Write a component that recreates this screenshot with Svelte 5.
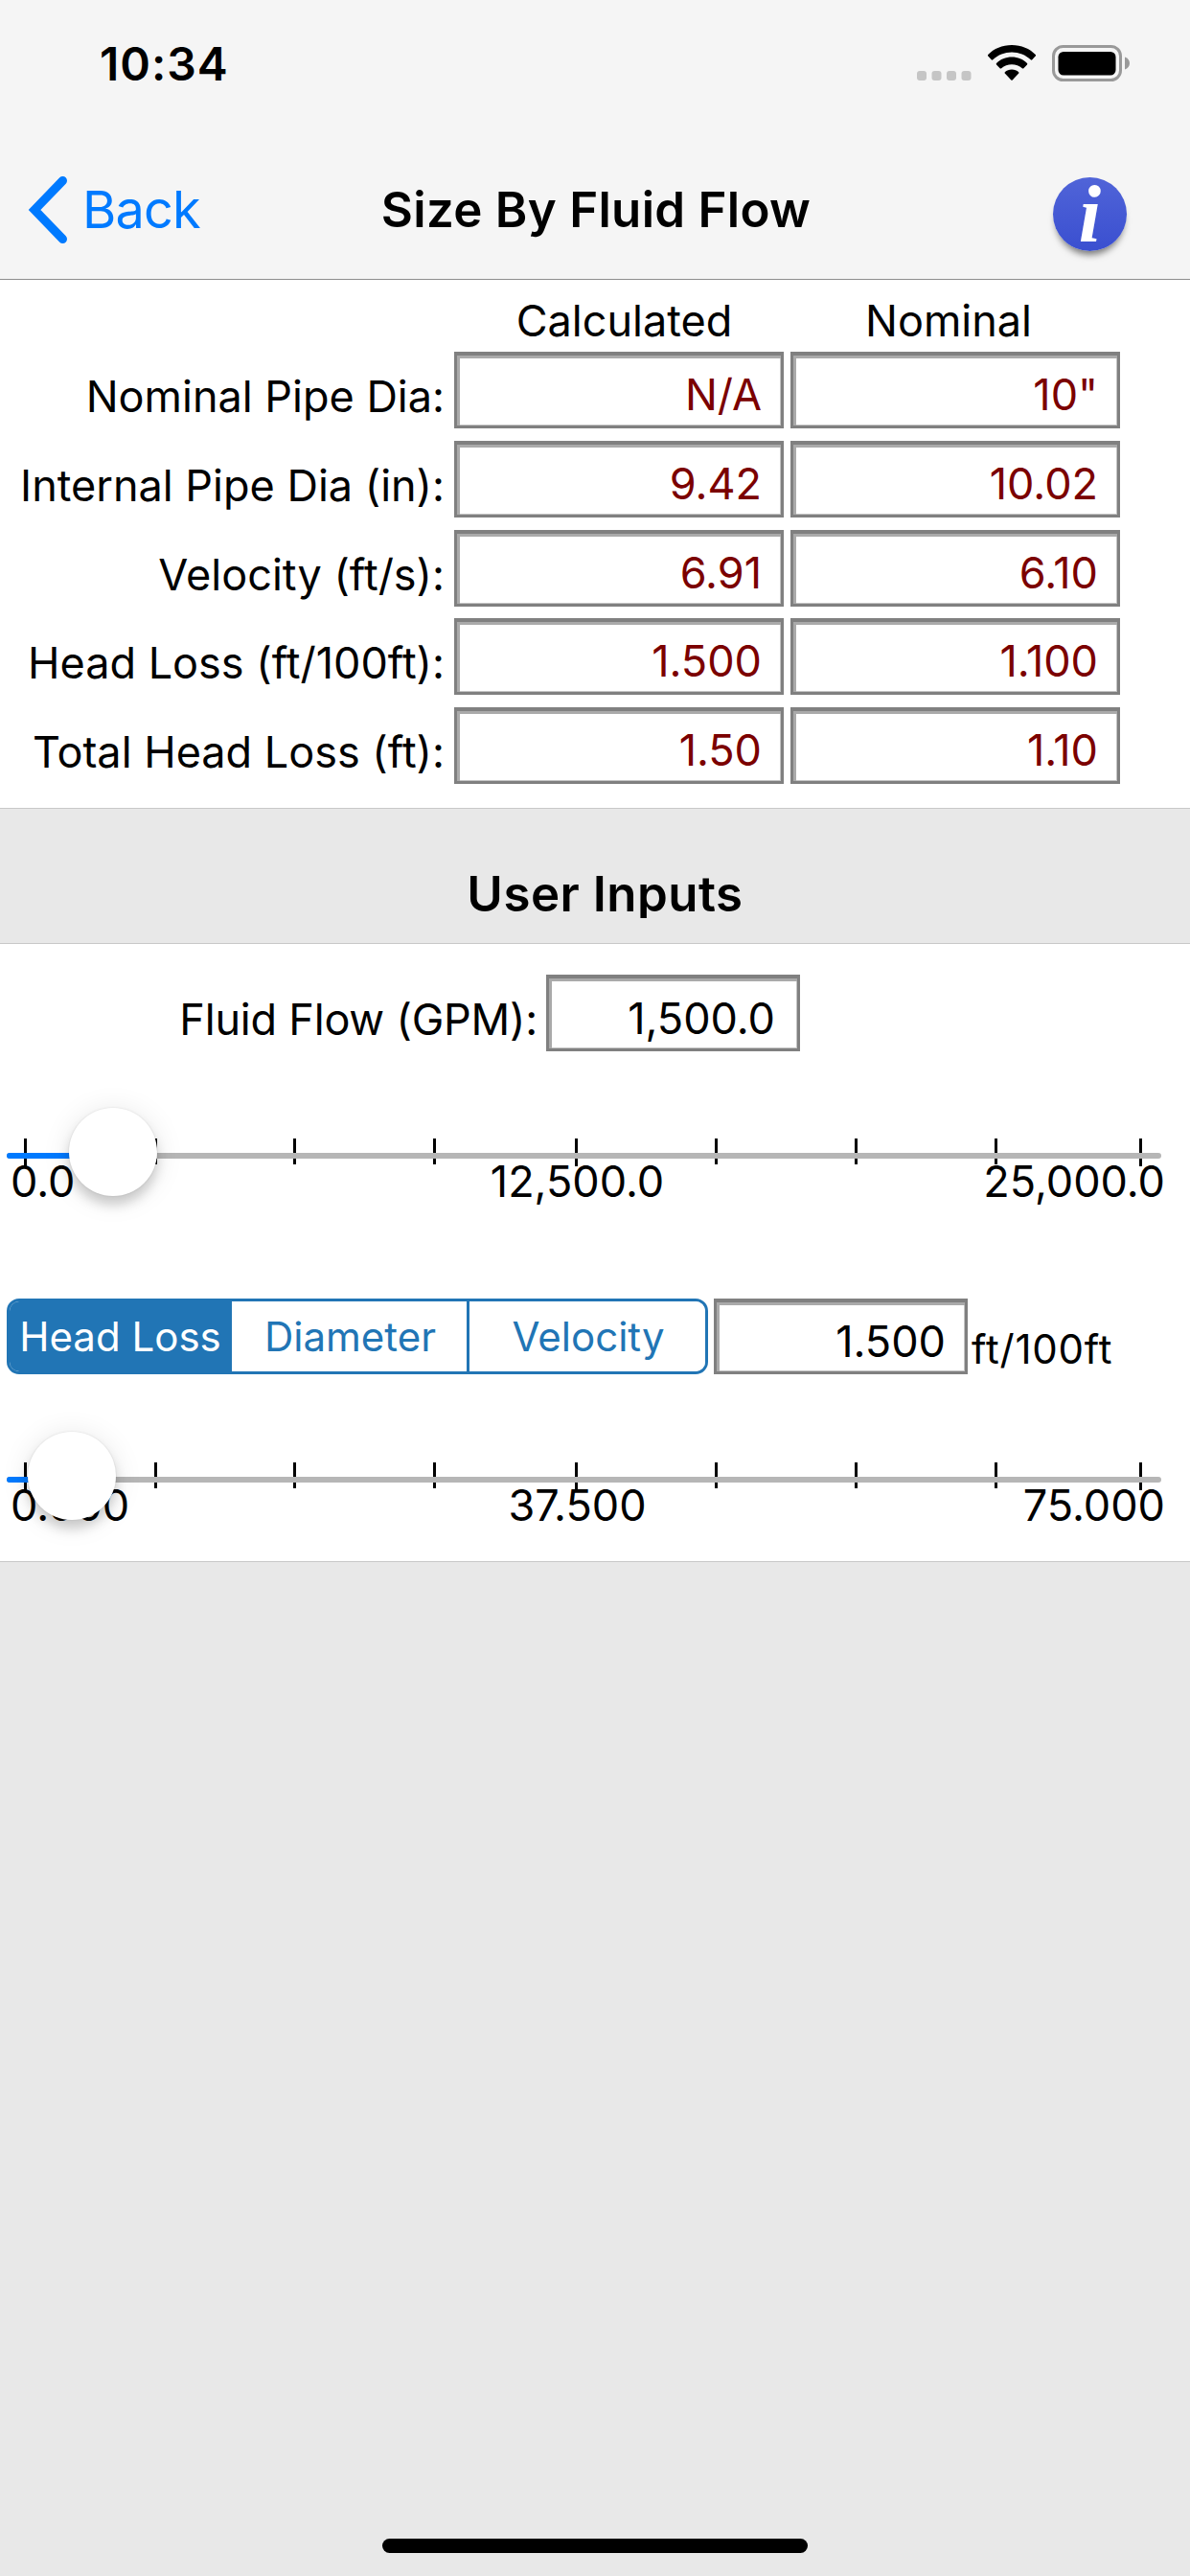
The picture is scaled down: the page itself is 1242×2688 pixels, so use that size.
<script>
  const results = [
    { label: 'Nominal Pipe Dia:', calculated: 'N/A', nominal: '10"' },
    { label: 'Internal Pipe Dia (in):', calculated: '9.42', nominal: '10.02' },
    { label: 'Velocity (ft/s):', calculated: '6.91', nominal: '6.10' },
    { label: 'Head Loss (ft/100ft):', calculated: '1.500', nominal: '1.100' },
    { label: 'Total Head Loss (ft):', calculated: '1.50', nominal: '1.10' },
  ];
  const modes = ['Head Loss', 'Diameter', 'Velocity'];
  // tick offsets along the 1205px track
  const ticks = [18, 154, 299, 445, 593, 739, 885, 1031, 1182];
  const flowScale = ['0.0', '12,500.0', '25,000.0'];
  const lossScale = ['0.000', '37.500', '75.000'];

  let mode = $state('Head Loss');
  let flow = $state('1,500.0');
  let loss = $state('1.500');
</script>

{#snippet slider(thumb, scale)}
  <div class="slider">
    <div class="track">
      {#each ticks as x, i}
        <span class="tick" class:long={i % 4 == 0} style="left: {x}px"></span>
      {/each}
      <div class="rail"></div>
      <div class="fill" style="width: {thumb}px"></div>
    </div>
    <div class="scale">
      {#each scale as text}
        <span>{text}</span>
      {/each}
    </div>
    <div class="thumb" style="left: {thumb}px"></div>
  </div>
{/snippet}

<div class="screen">
  <header>
    <div class="status">
      <span class="time">10:34</span>
      <div class="indicators">
        <svg class="cell" width="58" height="12" viewBox="0 0 58 12">
          {#each [0, 15.5, 31, 46.5] as x}
            <rect {x} y="0" width="10" height="10" rx="3" fill="#c5c5c5" />
          {/each}
        </svg>
        <svg class="wifi" width="50" height="38" viewBox="0 0 50 38">
          <path d="M25 0C35 0 43.500 3.700 50 10.200Q50.300 11 49.700 11.600L46.300 15.300Q45.500 16 44.700 15.300C39.300 10.400 32.500 7.600 25 7.600S10.700 10.400 5.300 15.300Q4.500 16 3.700 15.300L.3 11.600Q-.3 11 0 10.200C6.500 3.700 15 0 25 0Z" />
          <path d="M25 12.600C31.200 12.600 36.900 15 41 19Q41.600 19.700 41 20.400L37.400 24.200Q36.600 24.900 35.800 24.200C32.900 21.700 29.100 20.200 25 20.200S17.100 21.700 14.200 24.200Q13.400 24.900 12.600 24.200L9 20.400Q8.400 19.700 9 19C13.100 15 18.800 12.600 25 12.600Z" />
          <path d="M25 25.500C27.800 25.500 30.300 26.500 32.200 28.200Q32.800 28.900 32.200 29.600L25.700 36.400Q25 37 24.300 36.400L17.800 29.600Q17.200 28.900 17.800 28.200C19.700 26.500 22.200 25.500 25 25.500Z" />
        </svg>
        <svg class="battery" width="82" height="38" viewBox="0 0 82 38">
          <rect x="1.500" y="1.500" width="70" height="35" rx="10" fill="none" stroke="#999" stroke-width="3" />
          <rect x="6.500" y="7" width="60" height="24.500" rx="5.500" />
          <path d="M76 12.500C79 13.600 81 16 81 19S79 24.400 76 25.500Z" fill="#999" />
        </svg>
      </div>
    </div>
    <nav>
      <a class="back" href="#back">
        <svg width="44" height="70" viewBox="0 0 44 70">
          <path d="M37.500 4.500L8 35L37.500 65.500" fill="none" stroke="#007aff" stroke-width="9" stroke-linecap="round" stroke-linejoin="miter" />
        </svg>
        <span>Back</span>
      </a>
      <h1>Size By Fluid Flow</h1>
      <button class="info" aria-label="Info"><span>i</span></button>
    </nav>
  </header>

  <section class="results">
    <span></span>
    <span class="col first">Calculated</span>
    <span class="col second">Nominal</span>
    {#each results as row}
      <span class="label">{row.label}</span>
      <span class="field">{row.calculated}</span>
      <span class="field">{row.nominal}</span>
    {/each}
  </section>

  <h2><span>User Inputs</span></h2>

  <section class="inputs">
    <div class="flow">
      <span class="label">Fluid Flow (GPM):</span>
      <input class="field" bind:value={flow} aria-label="Fluid Flow" />
    </div>
    {@render slider(111, flowScale)}

    <div class="loss">
      <div class="segments">
        {#each modes as m}
          <button class:active={m == mode} onclick={() => (mode = m)}>{m}</button>
        {/each}
      </div>
      <input class="field" bind:value={loss} aria-label={mode} />
      <span class="unit">ft/100ft</span>
    </div>
    {@render slider(68, lossScale)}
  </section>

  <div class="home"></div>
</div>

<style>
:global(body) {
  background: #e8e8e8;
}
.screen {
  position: relative;
  width: 1242px;
  height: 2688px;
  overflow: hidden;
  background: #e8e8e8;
  color: #000;
  font-family: Inter, "Liberation Sans", sans-serif;
  font-size: 45px;
}
header {
  height: 291px;
  background: #f5f5f5;
  border-bottom: 1px solid #8e8e8e;
}
.status {
  display: flex;
  justify-content: space-between;
  height: 132px;
  padding: 0 62px 0 104px;
}
.time {
  padding-top: 37px;
  font-size: 48px;
  line-height: 60px;
  font-weight: 600;
  letter-spacing: 1px;
}
.indicators {
  display: flex;
  align-items: flex-start;
  padding-top: 47px;
}
.cell {
  margin: 27px 16px 0 0;
}
.battery {
  margin-left: 17px;
}
nav {
  display: grid;
  grid-template-columns: 300px 1fr 300px;
  height: 159px;
}
.back {
  display: flex;
  align-items: flex-start;
  padding: 52px 0 0 28px;
  color: #007aff;
  font-size: 54px;
  line-height: 70px;
  letter-spacing: -.8px;
  text-decoration: none;
}
.back span {
  margin-left: 14px;
}
h1 {
  margin: 0;
  padding: 52px 0 0 2px;
  font-size: 51px;
  line-height: 70px;
  font-weight: 600;
  letter-spacing: .3px;
  text-align: center;
  white-space: nowrap;
}
.info {
  justify-self: end;
  width: 77px;
  height: 77px;
  margin: 53px 66px 0 0;
  padding: 0;
  border: 0;
  border-radius: 50%;
  background: linear-gradient(#5064d8, #3a4fd0);
  box-shadow: 0 7px 7px -3px rgba(0, 0, 0, .5);
  color: #fff;
  font: italic bold 84px/70px "Liberation Serif", serif;
}
.results {
  display: grid;
  grid-template-columns: 467px 344px 344px;
  grid-template-rows: 62.160px repeat(5, 80px);
  column-gap: 7px;
  row-gap: 12.840px;
  height: 551px;
  background: #fff;
  border-bottom: 1px solid #c8c8c8;
}
.results .col {
  padding-top: 14px;
  line-height: 58px;
  text-align: center;
}
.results .first {
  padding-left: 11px;
}
.results .second {
  padding-right: 14px;
}
.label {
  line-height: 58px;
  padding-top: 18px;
  text-align: right;
  white-space: nowrap;
}
.results .label {
  padding-right: 3px;
}
.results .field {
  color: #7b0000;
}
.field {
  box-sizing: border-box;
  height: 80px;
  margin: 0;
  padding: 0 20px 0 0;
  border: 3px solid #808080;
  border-top-width: 4px;
  border-radius: 0;
  outline: 0;
  background: #fff;
  box-shadow: inset 3px 3px #aaa, inset -1px -1px #c4c4c4;
  color: #000;
  font-family: inherit;
  font-size: 45px;
  line-height: 82px;
  text-align: right;
}
input.field {
  padding-top: 9px;
  line-height: normal;
}
h2 {
  display: flex;
  justify-content: center;
  height: 82px;
  margin: 0;
  padding: 58px 0 0 21px;
  border-bottom: 1px solid #c8c8c8;
  font-size: 51px;
  line-height: 62px;
  font-weight: 600;
  letter-spacing: .5px;
}
/* the title's box is shorter than its line, so the descender is cut */
h2 span {
  height: 56px;
  overflow: hidden;
}
.inputs {
  height: 644px;
  background: #fff;
  border-bottom: 1px solid #c8c8c8;
}
.flow {
  display: flex;
  height: 171px;
  padding: 32px 0 0 187px;
}
.flow .label {
  width: 374px;
  margin-right: 9px;
  letter-spacing: -.2px;
}
.flow .field {
  width: 265px;
  padding-right: 23px;
}
.slider {
  position: relative;
  width: 1205px;
  margin-left: 7px;
}
.track {
  position: relative;
  height: 26px;
}
.tick {
  position: absolute;
  top: 0;
  width: 3px;
  height: 27px;
  background: #000;
}
.tick.long {
  height: 29px;
}
.rail,
.fill {
  position: absolute;
  top: 15px;
  left: 0;
  width: 100%;
  height: 6px;
  border-radius: 3px;
  background: #b6b6b6;
}
.fill {
  background: #007aff;
}
.scale {
  display: grid;
  grid-template-columns: 1fr 1fr 1fr;
  width: 1205px;
  margin: -10px 0 0 4px;
  line-height: 58px;
}
.scale span:nth-child(2) {
  padding-right: 22px;
  text-align: center;
}
.scale span:nth-child(3) {
  text-align: right;
}
.thumb {
  position: absolute;
  top: -32px;
  width: 92px;
  height: 92px;
  margin-left: -46px;
  border-radius: 50%;
  background: #fff;
  box-shadow: 0 0 1px 1px rgba(0, 0, 0, .04), 0 9px 12px rgba(0, 0, 0, .17), 0 3px 30px rgba(0, 0, 0, .1);
}
.loss {
  display: flex;
  height: 171px;
  margin-top: 93px;
}
.segments {
  box-sizing: border-box;
  display: grid;
  grid-template-columns: 232px 248px 1fr;
  width: 732px;
  height: 79px;
  margin: 0 6px 0 7px;
  border: 3px solid #2175b5;
  border-radius: 13px;
  overflow: hidden;
}
.segments button {
  margin: 0;
  padding: 0 0 0 2px;
  border: 0;
  border-right: 3px solid #2175b5;
  background: #fff;
  color: #2175b5;
  font-family: inherit;
  font-size: 42px;
  white-space: nowrap;
}
.segments button:last-child {
  border-right: 0;
}
.segments .active {
  background: #2175b5;
  color: #fff;
}
.loss .field {
  width: 265px;
  height: 79px;
}
.unit {
  margin-left: 4px;
  padding-top: 26px;
  font-size: 42px;
  line-height: 54px;
  letter-spacing: .8px;
}
.home {
  position: absolute;
  left: 399px;
  bottom: 24px;
  width: 444px;
  height: 15px;
  border-radius: 8px;
  background: #000;
}
</style>
